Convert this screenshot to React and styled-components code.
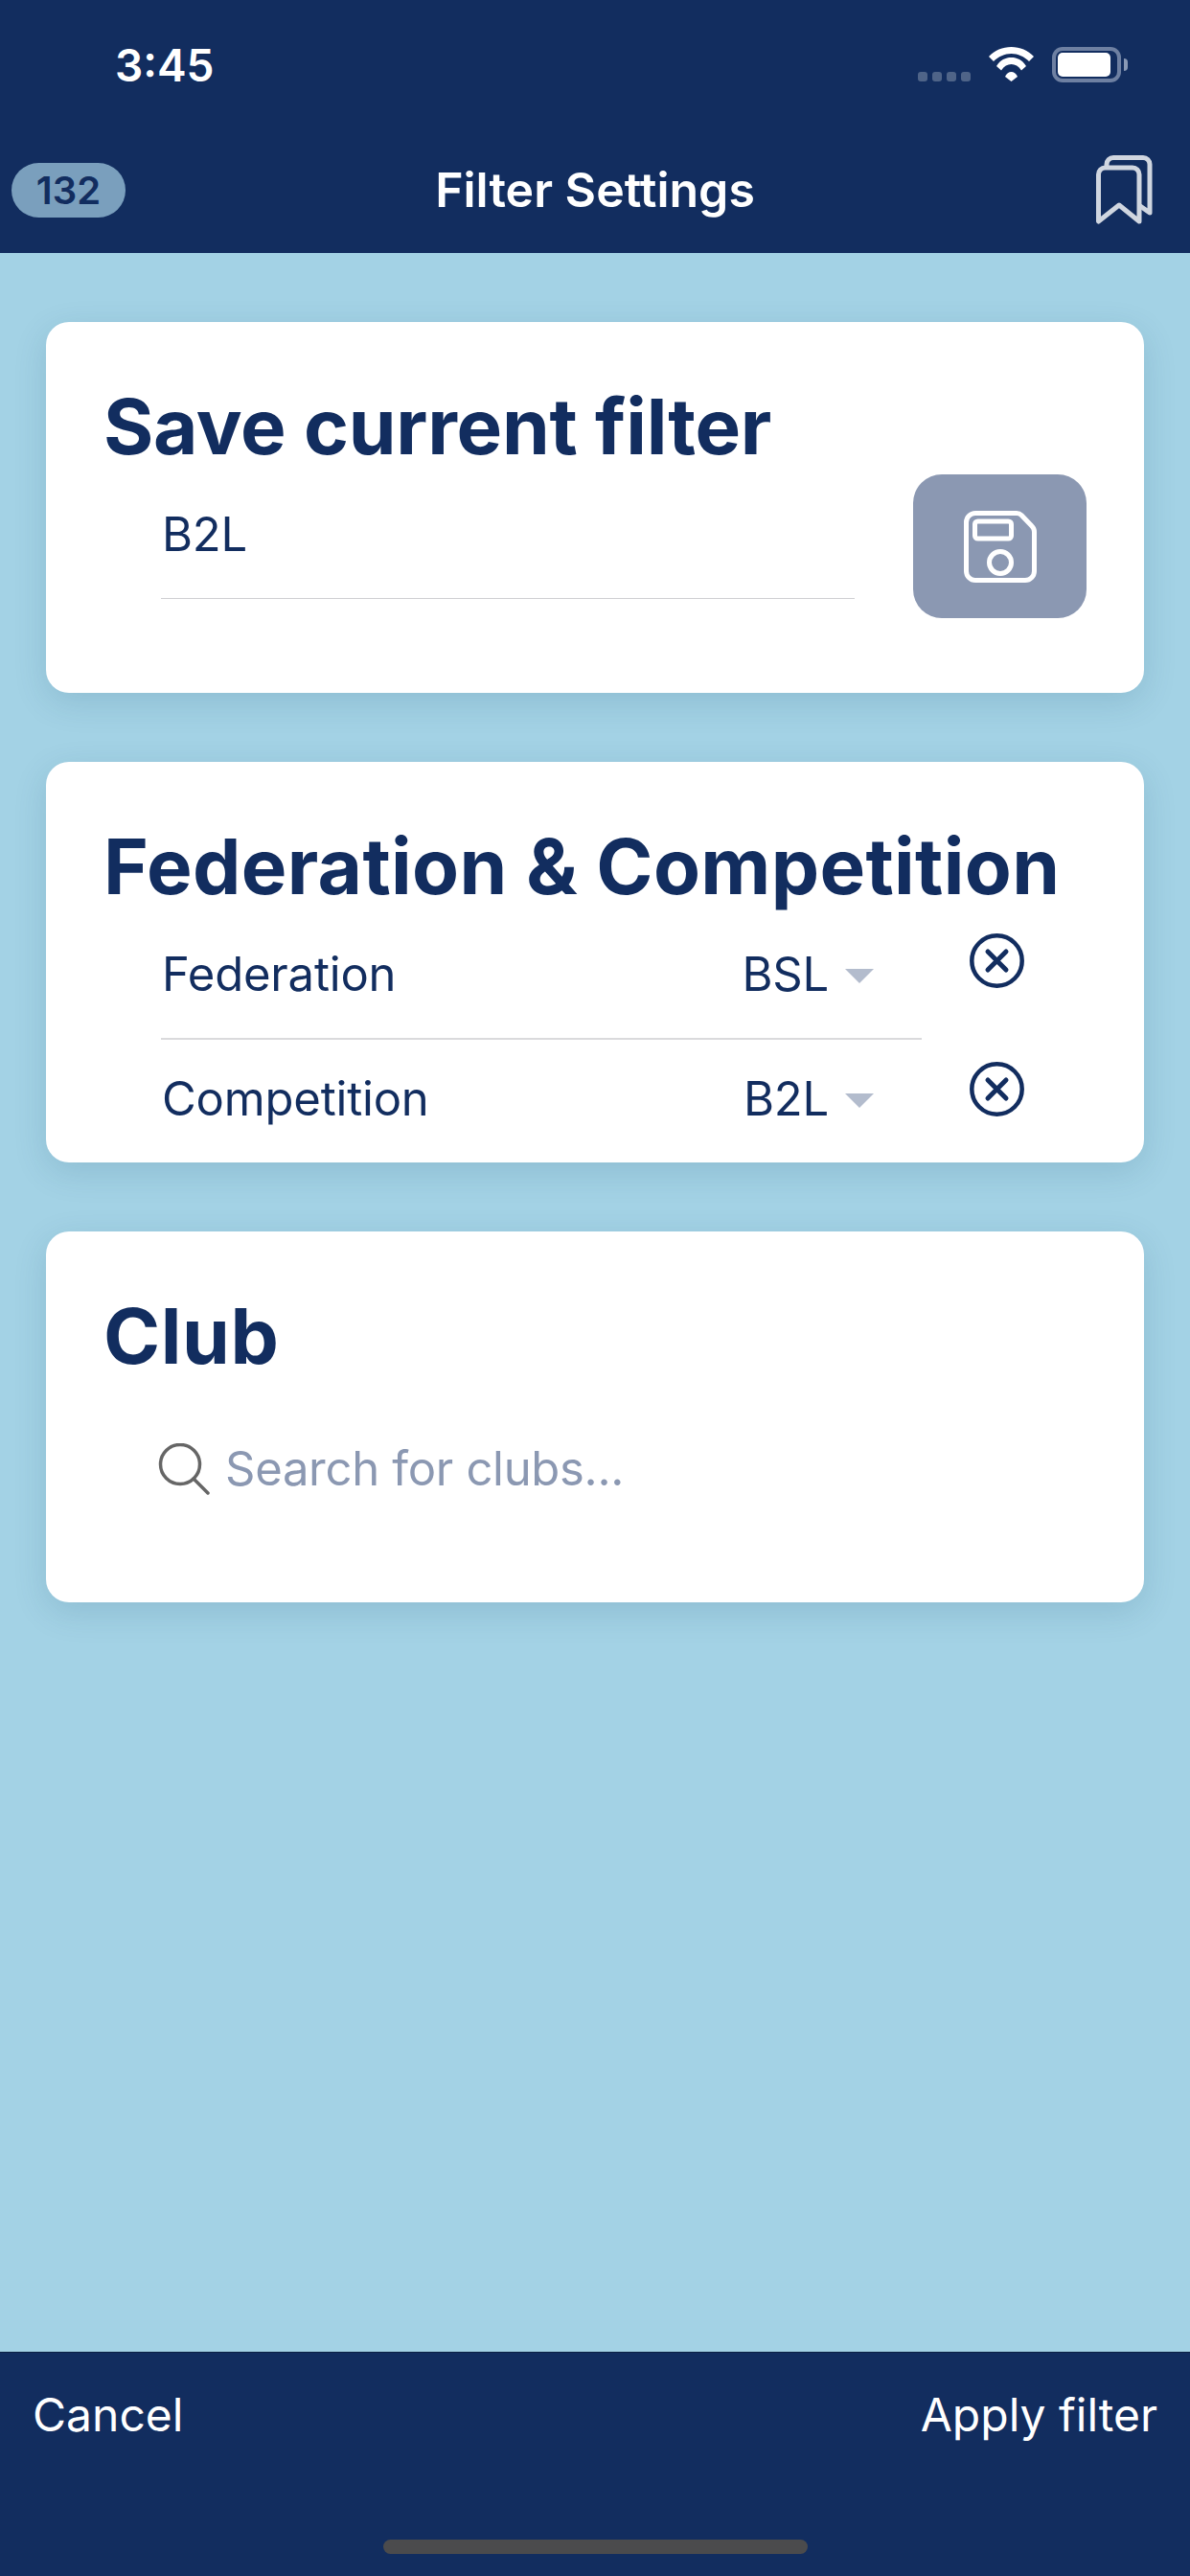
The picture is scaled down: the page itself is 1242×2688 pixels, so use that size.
import React from 'react';
import styled, { createGlobalStyle } from 'styled-components';

const navy = '#122d5f';
const sans = '"Inter", "Liberation Sans", sans-serif';

const GlobalStyle = createGlobalStyle`
  html, body {
    margin: 0;
    padding: 0;
    background: #a3d2e5;
  }
  * {
    box-sizing: border-box;
  }
`;

const Screen = styled.div`
  width: 1242px;
  height: 2688px;
  display: flex;
  flex-direction: column;
  background: #a3d2e5;
  font-family: ${sans};
  color: ${navy};
  overflow: hidden;
`;

const Header = styled.header`
  height: 264px;
  background: ${navy};
  color: #fff;
`;

const StatusBar = styled.div`
  height: 96px;
  padding: 40px 65px 0 120px;
  display: flex;
  justify-content: space-between;
  align-items: flex-start;
`;

const Time = styled.span`
  font-size: 46px;
  line-height: 56px;
  font-weight: 600;
`;

const StatusIcons = styled.div`
  height: 37px;
  margin-top: 9px;
  display: flex;
  align-items: flex-start;
`;

const SignalDots = styled.div`
  display: flex;
  gap: 5px;
  margin: 26px 19px 0 0;
`;

const SignalDot = styled.span`
  width: 10px;
  height: 10px;
  border-radius: 3px;
  background: #4f6488;
`;

const Battery = styled.div`
  position: relative;
  width: 72px;
  height: 37px;
  margin-left: 19px;
  margin-right: 7px;
  padding: 6px 11px 6px 6px;
  border: 0;
  border-radius: 11px;
  box-shadow: inset 0 0 0 4px #6e80a2;
  &::after {
    content: '';
    position: absolute;
    right: -7px;
    top: 12px;
    width: 4px;
    height: 13px;
    border-radius: 0 4px 4px 0;
    background: #8a99b5;
  }
`;

const BatteryFill = styled.div`
  height: 100%;
  border-radius: 5px;
  background: #fff;
`;

const NavBar = styled.div`
  height: 72px;
  margin-top: 66px;
  display: grid;
  grid-template-columns: 1fr auto 1fr;
  align-items: center;
`;

const CountBadge = styled.span`
  justify-self: start;
  width: 119px;
  height: 57px;
  margin-left: 12px;
  display: flex;
  align-items: center;
  justify-content: center;
  border-radius: 29px;
  background: #7a9fbd;
  color: ${navy};
  font-size: 40px;
  font-weight: 600;
`;

const NavTitle = styled.h1`
  margin: 0;
  font-size: 50px;
  line-height: 60px;
  font-weight: 600;
`;

const BookmarksButton = styled.div`
  justify-self: end;
  margin-right: 39px;
  display: flex;
`;

const Content = styled.main`
  flex: 1;
  padding: 72px 48px 0;
  display: flex;
  flex-direction: column;
  gap: 72px;
`;

const Card = styled.section`
  padding: 62px 0 ${(p) => p.$bottom}px 60px;
  background: #fff;
  border-radius: 24px;
  box-shadow: 0 10px 34px rgba(30, 80, 110, 0.16);
`;

const CardTitle = styled.h2`
  margin: 0;
  font-size: 80px;
  line-height: 94px;
  font-weight: 700;
  letter-spacing: ${(p) => p.$tracking || 0}px;
`;

const SaveRow = styled.div`
  height: 153px;
  display: flex;
  align-items: flex-start;
`;

const NameField = styled.div`
  width: 724px;
  margin: 36px 0 0 60px;
  padding: 0 1px 36px;
  border-bottom: 1px solid #cfcfd2;
  font-size: 49px;
  line-height: 60px;
  letter-spacing: -0.2px;
`;

const SaveButton = styled.div`
  width: 181px;
  height: 150px;
  margin: 3px 0 0 61px;
  display: flex;
  align-items: center;
  justify-content: center;
  border-radius: 30px;
  background: #8b98b2;
`;

const FilterRow = styled.div`
  display: flex;
  align-items: flex-start;
`;

const FilterField = styled.div`
  width: 794px;
  margin-left: 60px;
  padding: ${(p) => (p.$first ? 36 : 32)}px 50px 36px 1px;
  display: flex;
  justify-content: space-between;
  border-bottom: ${(p) => (p.$first ? '2px solid #dadadc' : '0')};
  font-size: 49px;
  line-height: 60px;
  letter-spacing: -0.2px;
`;

const SelectValue = styled.div`
  display: flex;
  align-items: center;
  gap: 17px;
`;

const Caret = styled.span`
  width: 0;
  height: 0;
  border-left: 15px solid transparent;
  border-right: 15px solid transparent;
  border-top: 15px solid #b3bccd;
  margin-top: 2px;
`;

const ClearButton = styled.div`
  margin: 23px 0 0 50px;
  display: flex;
`;

const SearchRow = styled.div`
  margin: 62px 0 0 57px;
  display: flex;
  align-items: center;
  gap: 16px;
  color: #8b98b2;
  font-size: 49px;
  line-height: 60px;
  letter-spacing: -0.3px;
`;

const Footer = styled.footer`
  height: 234px;
  padding: 35px 34px 0;
  background: ${navy};
  border-top: 1px solid #0d2145;
  color: #fff;
  display: flex;
  flex-direction: column;
`;

const FooterActions = styled.div`
  display: flex;
  justify-content: space-between;
  font-size: 48px;
  line-height: 60px;
`;

const HomeIndicator = styled.div`
  width: 443px;
  height: 15px;
  margin: 100px auto 0;
  border-radius: 8px;
  background: #4b4b4d;
`;

function WifiIcon() {
  return (
    <svg width="47" height="36" viewBox="0 0 47 36" fill="#fff">
      <path d="M0 10 C6 3.5 14.5 0 23.5 0 C32.5 0 41 3.5 47 10 L42 15 C37 10 30.5 7 23.5 7 C16.5 7 10 10 5 15 Z" />
      <path d="M8 20 C12 13.5 17.5 11 23.5 11 C29.5 11 35 13.5 39 20 L34 24.500 C31 20 27.500 18 23.5 18 C19.5 18 16 20 13 24.500 Z" />
      <path d="M17 31 C18.500 27.500 21 26 23.5 26 C26 26 28.500 27.500 30 31 L23.5 36 Z" />
    </svg>
  );
}

function BookmarksIcon() {
  return (
    <svg width="59" height="72" viewBox="0 0 59 72" fill="none" stroke="#d0d6e0" strokeWidth="5" strokeLinejoin="round" strokeLinecap="round">
      <path d="M2.500 69 V20 a7 7 0 0 1 7 -7 H38 a7 7 0 0 1 7 7 V69 L24 52 Z" />
      <path d="M11 11 V9.500 a7 7 0 0 1 7 -7 H49 a7 7 0 0 1 7 7 V60 L46 53" />
    </svg>
  );
}

function SaveIcon() {
  return (
    <svg width="76" height="75" viewBox="0 0 76 75" fill="none" stroke="#fff" strokeWidth="5" strokeLinejoin="round">
      <path d="M12 2.500 H55 Q58 2.500 60 4.500 L71 16 Q73.500 18.500 73.500 22 V63 a9.500 9.500 0 0 1 -9.500 9.500 H12 a9.500 9.500 0 0 1 -9.500 -9.500 V12 a9.500 9.500 0 0 1 9.500 -9.500 Z" />
      <rect x="11.500" y="11" width="38" height="18" rx="3" />
      <circle cx="38" cy="54" r="11.500" />
    </svg>
  );
}

function ClearIcon() {
  return (
    <svg width="57" height="57" viewBox="0 0 57 57" fill="none" stroke={navy} strokeLinecap="round">
      <circle cx="28.500" cy="28.500" r="26.200" strokeWidth="4.500" />
      <path d="M19 19 L38 38 M38 19 L19 38" strokeWidth="5" />
    </svg>
  );
}

function SearchIcon() {
  return (
    <svg width="54" height="54" viewBox="0 0 54 54" fill="none" stroke="#666" strokeWidth="3.500" strokeLinecap="round">
      <circle cx="23" cy="22" r="20.500" />
      <path d="M37 37 L52 52" />
    </svg>
  );
}

function FilterOption({ label, value, first }) {
  return (
    <FilterRow>
      <FilterField $first={first}>
        <span>{label}</span>
        <SelectValue>
          <span>{value}</span>
          <Caret />
        </SelectValue>
      </FilterField>
      <ClearButton>
        <ClearIcon />
      </ClearButton>
    </FilterRow>
  );
}

export default function App() {
  return (
    <Screen>
      <GlobalStyle />
      <Header>
        <StatusBar>
          <Time>3:45</Time>
          <StatusIcons>
            <SignalDots>
              {[0, 1, 2, 3].map((i) => (
                <SignalDot key={i} />
              ))}
            </SignalDots>
            <WifiIcon />
            <Battery>
              <BatteryFill />
            </Battery>
          </StatusIcons>
        </StatusBar>
        <NavBar>
          <CountBadge>132</CountBadge>
          <NavTitle>Filter Settings</NavTitle>
          <BookmarksButton>
            <BookmarksIcon />
          </BookmarksButton>
        </NavBar>
      </Header>

      <Content>
        <Card $bottom={78}>
          <CardTitle $tracking={-0.3}>Save current filter</CardTitle>
          <SaveRow>
            <NameField>B2L</NameField>
            <SaveButton>
              <SaveIcon />
            </SaveButton>
          </SaveRow>
        </Card>

        <Card $bottom={0}>
          <CardTitle $tracking={0.35}>Federation &amp; Competition</CardTitle>
          <FilterOption label="Federation" value="BSL" first />
          <FilterOption label="Competition" value="B2L" />
        </Card>

        <Card $bottom={109}>
          <CardTitle $tracking={0.6}>Club</CardTitle>
          <SearchRow>
            <SearchIcon />
            <span>Search for clubs...</span>
          </SearchRow>
        </Card>
      </Content>

      <Footer>
        <FooterActions>
          <span>Cancel</span>
          <span>Apply filter</span>
        </FooterActions>
        <HomeIndicator />
      </Footer>
    </Screen>
  );
}
